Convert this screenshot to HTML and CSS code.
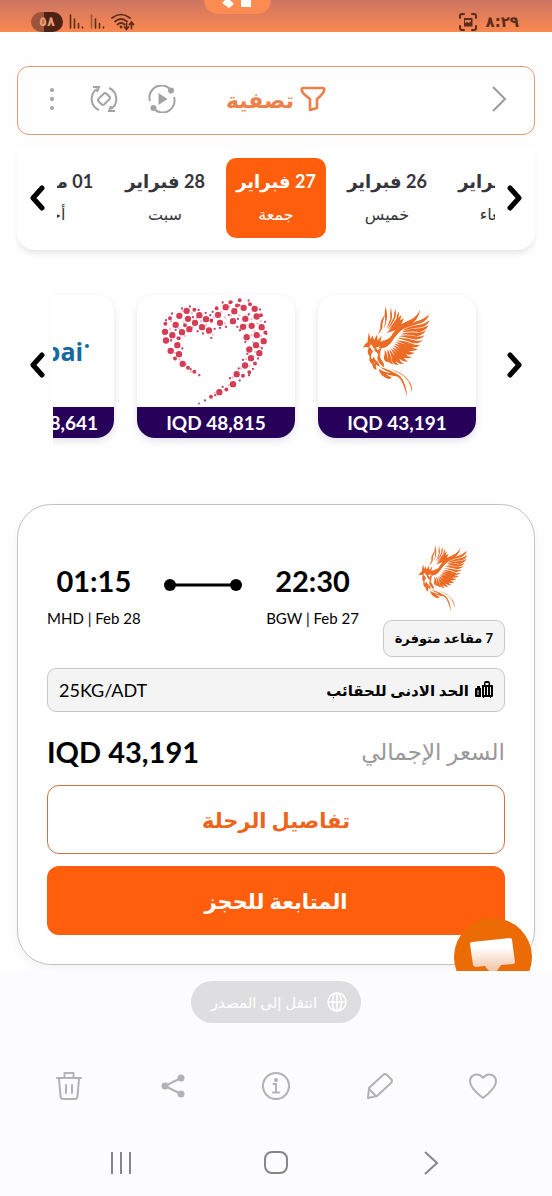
FILE: index.html
```html
<!DOCTYPE html>
<html lang="ar" dir="rtl">
<head>
<meta charset="utf-8">
<meta name="viewport" content="width=device-width, initial-scale=1">
<title>نتائج الرحلات</title>
<link rel="stylesheet" href="styles.css">
</head>
<body>
<svg class="defs" aria-hidden="true">
  <symbol id="phoenix" viewBox="180 80 210 280">
    <g fill="#ec6c26">
      <path d="M251 84q-6 24-1 44l-5 24q12-25 10-45zM267 86q-5 20-2 34l-12 32q20-28 17-43zM281 92q-7 12-5 24l-20 38q26-28 26-47zM292 99q-10 12-8 22l-27 37q32-27 33-43zM299 110q-15 11-16 21l-24 29q33-20 36-36zM306 120q-20 10-24 18l-23 24q34-15 42-30zM305 135q-24 5-34 13l-18 16q40-11 50-21z"/>
      <path d="M248 110q-16 18-13 40l-8 18q18-16 14-30z"/>
      <path d="M355 93q-10 22-27 30-40 16-56 43-8 17-24 20-12 6-18 24 26 2 40-20 14-24 40-42 40-16 45-55z"/>
      <path d="M381 108q-15 16-35 20-30 10-42 24 36-14 55-18 20-10 22-26zM383 125q-16 13-36 15-30 5-46 17 38-9 55-9 22-6 27-23zM380 142q-19 9-37 9-26 0-44 11 40-4 54 0 20-6 27-20zM372 157q-14 8-30 6-27-4-47 5 35 2 49 6 20-3 28-17zM368 171q-13 6-28 3-27-6-50 0 33 5 48 10 20 0 30-13zM364 185q-13 5-27 1-27-8-51-6 31 8 46 15 20 2 32-10zM357 199q-14 4-26-2-25-11-49-10 29 10 43 20 20 3 32-8zM349 212q-14 1-24-6-23-14-46-14 26 12 38 25 20 5 32-5zM338 224q-13 0-21-9-19-17-41-18 23 14 32 30 17 7 30-3zM329 237q-13-2-19-12-15-19-37-23 19 16 26 33 15 10 30 2zM319 249q-12-4-16-15-11-19-33-27 16 17 21 34 12 12 28 8zM305 257q-11-6-13-17-7-19-26-29 12 17 14 35 9 14 25 11zM290 261q-9-6-10-17-4-19-19-31 8 17 8 35 7 14 21 13zM275 259q-8-8-8-18-2-17-12-27 3 15 1 31 6 13 19 14zM260 252q-6-8-5-17 0-13-7-21 1 13-3 26 3 12 15 12z"/>
      <path d="M182 209q4-12 14-17l4-29 6 20 5-12 5 14 9-16 2 18 12-15-4 19 12-6-15 20-17 5-8-12-7 10q-8-3-18 1z"/>
      <path d="M202 205q-11 17 1 31-5 14 8 23 0 12 12 17-4-17 2-31l-9 13q-3-14 2-23l-10 8q-4-13 5-23zM219 201q-7 16 6 23l10 13q-3-20 7-31l-16 10zM229 229q-7 12 2 24l13 15q5-10-4-20zM214 236q-3 16 9 25l10 5q-2-14-11-18z"/>
      <path d="M230 272q2 20 27 30 9 2 12-4l-19-10q24 6 38 8 16 13 27 62-1-42-21-64-30-20-61-27 20 14 34 18-16 0-37-13z"/>
      <path d="M264 271q39 13 54 33 15 18 12 40-4-43-42-61-15-7-24-12z"/>
    </g>
  </symbol>
</svg>

<div class="app">
  <header class="status">
    <span class="clock">٨:٢٩</span>
    <svg class="capture" viewBox="0 0 18 18" width="18" height="18" fill="none" stroke="#5b2c18" stroke-width="2" stroke-linecap="round"><path d="M1 5V3q0-2 2-2h2M13 1h2q2 0 2 2v2M17 13v2q0 2-2 2h-2M5 17H3q-2 0-2-2v-2"/><path fill="#5b2c18" stroke="none" fill-rule="evenodd" d="M5 5h8.500v8.500H5zM6 7v3l2-1 2 1 2-2V7z"/></svg>
    <span class="signals">
      <svg viewBox="0 0 24 18" width="24" height="18" fill="none" stroke="#5b2c18" stroke-width="1.700" stroke-linecap="round"><path d="M1 5q9-7 18 0M4 8.500q6-5 12 0M6.500 11.500q3.500-3 7 0"/><circle cx="10" cy="14" r=".6" fill="#5b2c18"/><path d="M15.500 10v6M13.500 14l2 2.500 2-2.500M20.500 15.500v-6M18.500 11.500l2-2.500 2 2.500"/></svg>
      <svg viewBox="0 0 15 16" width="15" height="16" fill="none" stroke="#5b2c18" stroke-width="1.600" stroke-linecap="round"><path stroke-opacity=".5" d="M1.500 1v13"/><path d="M5.500 5v9M9.500 9.500V14M13.500 13v1"/></svg>
      <svg viewBox="0 0 15 16" width="15" height="16" fill="none" stroke="#5b2c18" stroke-width="1.600" stroke-linecap="round"><path d="M1.500 1v13M5.500 5v9M9.500 9.500V14M13.500 13v1"/></svg>
      <span class="battery">٥٨</span>
    </span>
    <span class="island"><svg viewBox="0 0 32 9" width="32" height="9" fill="#fff"><path d="M0 3l3-3h5l4 4-5 4zM19 0h10v7H19z"/></svg></span>
  </header>

  <main class="content">
    <div class="filter">
      <button class="plain" aria-label="التالي"><svg viewBox="0 0 18 28" width="18" height="28" fill="none" stroke="#9b9b9b" stroke-width="2"><path d="M3 2l12 12L3 26"/></svg></button>
      <button class="plain filter-name"><svg viewBox="0 0 26 26" width="26" height="26" fill="none" stroke="#ed8049" stroke-width="2.600" stroke-linejoin="round"><path d="M3 2h20q2 0 1 3-1 3-7 8v9l-7 2V13Q3 8 2 5 1 2 3 2z"/></svg>تصفية</button>
      <div class="tools">
        <button class="plain" aria-label="تشغيل"><svg viewBox="0 0 28 28" width="28" height="28" fill="none" stroke="#a3a3a3" stroke-width="2"><path d="M2 16A12 12 0 0 1 22 4M26 12A12 12 0 0 1 6 24"/><circle cx="23" cy="5.500" r="2" fill="#a3a3a3"/><circle cx="5.500" cy="23" r="2" fill="#a3a3a3"/><path fill="#a3a3a3" stroke="none" d="M10.500 8l9 6-9 6z"/></svg></button>
        <button class="plain" aria-label="تدوير"><svg viewBox="0 0 28 28" width="28" height="28" fill="none" stroke="#a3a3a3" stroke-width="2"><path d="M9 25A12 12 0 0 1 7 4M3 2h6l-2 5M19 3a12 12 0 0 1 2 21M25 26h-6l2-5"/><rect x="8.500" y="10" width="11" height="8" rx="2" transform="rotate(-45 14 14)"/></svg></button>
        <button class="plain" aria-label="المزيد"><svg viewBox="6 0 16 28" width="16" height="28" fill="#a3a3a3"><circle cx="14" cy="5" r="2"/><circle cx="14" cy="14" r="2"/><circle cx="14" cy="23" r="2"/></svg></button>
      </div>
    </div>

    <section class="dates">
      <button class="plain arrow" aria-label="السابق"><svg viewBox="0 0 16 26" width="16" height="26"><path d="M3 3l9 10-9 10"/></svg></button>
      <div class="date-list">
        <button class="date"><b>25 فبراير</b><span>أربعاء</span></button>
        <button class="date"><b>26 فبراير</b><span>خميس</span></button>
        <button class="date active"><b>27 فبراير</b><span>جمعة</span></button>
        <button class="date"><b>28 فبراير</b><span>سبت</span></button>
        <button class="date"><b>01 مارس</b><span>أحد</span></button>
      </div>
      <button class="plain arrow" aria-label="التالي"><svg viewBox="0 0 16 26" width="16" height="26"><path d="M13 3L4 13l9 10"/></svg></button>
    </section>

    <section class="airlines">
      <button class="plain arrow" aria-label="السابق"><svg viewBox="0 0 16 26" width="16" height="26"><path d="M3 3l9 10-9 10"/></svg></button>
      <div class="airline-list">
        <article class="airline">
          <div class="logo"><svg width="70" height="93"><use href="#phoenix"/></svg></div>
          <div class="fare" dir="ltr">IQD 43,191</div>
        </article>
        <article class="airline">
          <div class="logo"><svg viewBox="425 50 330 335" width="110" height="112" fill="none" stroke-linecap="round">
            <path stroke="#f8bdc2" stroke-width="7" d="M455 128h0M490 98h0M518 104h0M493 132h0M520 146h0M480 150h0M456 188h0M472 178h0M497 172h0M452 152h0M532 120h0M545 128h0M560 140h0M576 132h0M584 117h0M606 100h0M617 117h0M634 110h0M630 84h0M655 84h0M660 110h0M690 75h0M690 105h0M680 140h0M696 122h0M724 128h0M714 135h0M705 158h0M696 170h0M725 172h0M722 205h0M700 190h0M708 220h0M680 242h0M665 270h0M690 262h0M640 297h0M628 320h0M586 344h0M466 223h0M480 243h0M500 258h0M515 280h0M580 168h0M565 164h0M617 135h0"/>
            <path stroke="#b94878" stroke-width="7" d="M440 125h0M458 105h0M488 90h0M512 84h0M538 94h0M559 103h0M573 110h0M580 100h0M591 88h0M610 72h0M637 70h0M660 80h0M688 66h0M722 93h0M737 130h0M741 166h0M728 209h0M716 240h0M701 271h0M689 290h0M661 306h0M632 299h0M610 325h0M557 366h0M588 350h0M535 158h0M551 165h0M576 178h0M586 151h0M602 148h0M620 145h0M654 145h0M662 155h0M678 190h0M684 226h0M671 244h0M658 270h0M540 290h0M514 272h0M480 179h0M489 210h0M455 185h0M469 154h0M521 116h0M628 109h0M656 121h0M688 108h0"/>
            <path stroke="#d63c53" stroke-width="12" d="M452 119h0M525 94h0M633 71h0M661 65h0M692 77h0M653 81h0M725 110h0M738 162h0M467 240h0M576 126h0M592 89h0M690 281h0M671 292h0M621 333h0M575 355h0M525 280h0M506 268h0M478 179h0M707 255h0M497 140h0M438 136h0"/>
            <path stroke="#d63c53" stroke-width="19" d="M502 97h0M480 112h0M506 121h0M540 110h0M527 133h0M510 152h0M469 139h0M437 160h0M488 161h0M459 170h0M440 186h0M474 200h0M454 217h0M479 227h0M490 256h0M548 146h0M569 156h0M560 122h0M596 109h0M602 133h0M619 86h0M645 98h0M641 128h0M673 88h0M678 121h0M671 145h0M706 91h0M712 114h0M697 142h0M712 170h0M682 176h0M727 146h0M733 188h0M710 200h0M690 213h0M720 224h0M695 239h0M677 261h0M652 287h0M641 317h0M600 341h0"/>
            <path stroke="#b94878" stroke-width="6" d="M539 375h0"/>
          </svg></div>
          <div class="fare" dir="ltr">IQD 48,815</div>
        </article>
        <article class="airline">
          <div class="logo flydubai" dir="ltr"><i>fly</i>dubai<span></span></div>
          <div class="fare" dir="ltr">IQD 1,038,641</div>
        </article>
      </div>
      <button class="plain arrow" aria-label="التالي"><svg viewBox="0 0 16 26" width="16" height="26"><path d="M13 3L4 13l9 10"/></svg></button>
    </section>

    <article class="flight">
      <div class="legs">
        <div class="carrier">
          <svg width="51" height="68"><use href="#phoenix"/></svg>
          <span class="seats">7 مقاعد متوفرة</span>
        </div>
        <div class="leg" dir="ltr"><b>22:30</b><span>BGW | Feb 27</span></div>
        <svg class="route" viewBox="0 0 78 12" width="78" height="12"><path stroke="#000" stroke-width="3" d="M6 6h66"/><circle cx="6" cy="6" r="6"/><circle cx="72" cy="6" r="6"/></svg>
        <div class="leg" dir="ltr"><b>01:15</b><span>MHD | Feb 28</span></div>
      </div>
      <div class="baggage">
        <svg viewBox="0 0 18 18" width="18" height="18"><path fill-rule="evenodd" d="M1 7h1V5h3v2h1v9H1q-1 0-1-1V8q0-1 1-1zm1.500 2v5h1V9zM7 4h2V2q0-2 2-2h2q2 0 2 2v2h2q1 0 1 1v10q0 1-1 1h-1v1h-1v-1H9v1H8v-1H7zM10.500 4h3V2h-3zM9 6v8h1V6zm3 0v8h1V6zm3 0v8h1V6z"/></svg>
        <b>الحد الادنى للحقائب</b>
        <span class="weight" dir="ltr">25KG/ADT</span>
      </div>
      <div class="total"><span>السعر الإجمالي</span><b dir="ltr">IQD 43,191</b></div>
      <button class="action outline">تفاصيل الرحلة</button>
      <button class="action">المتابعة للحجز</button>
    </article>
  </main>

  <button class="chat" aria-label="محادثة"><svg viewBox="0 0 78 53" width="78" height="53"><defs><linearGradient id="bubble" x1="0" y1="0" x2="0" y2="1"><stop offset=".25" stop-color="#fff"/><stop offset="1" stop-color="#f0b896"/></linearGradient></defs><path fill="url(#bubble)" d="M18 24l38-4q2 0 2 2l3 22q0 2-2 2l-12 1-2 3-5 7-7-6-2-3-9 1q-2 0-3-2l-3-21q0-2 2-2z"/></svg></button>
</div>

<footer class="bottom">
  <button class="source"><svg viewBox="0 0 20 20" width="20" height="20" fill="none" stroke="#fff" stroke-width="1.500"><circle cx="10" cy="10" r="9"/><ellipse cx="10" cy="10" rx="4.500" ry="9"/><path d="M1 10h18M10 1v18"/></svg>انتقل إلى المصدر</button>
  <div class="photo-tools">
    <button class="plain" aria-label="المفضلة"><svg viewBox="0 0 30 30"><path d="M15 27Q2 17 2 10.500C2 3 11 1 15 7c4-6 13-4 13 3.500Q28 17 15 27z"/></svg></button>
    <button class="plain" aria-label="تعديل"><svg viewBox="0 0 30 30"><path d="M3 27l1-10L18 4q2-2 4 0l4 4q2 2 0 4L12 25zM4 18l7 7"/></svg></button>
    <button class="plain" aria-label="معلومات"><svg viewBox="0 0 30 30"><circle cx="15" cy="15" r="13"/><path d="M12.500 13H15v8M12 21.500h6"/><circle cx="15" cy="9" r="1" fill="#b2b2b4"/></svg></button>
    <button class="plain" aria-label="مشاركة"><svg viewBox="0 0 30 30"><path d="M23 7L7 15l16 8"/><g fill="#b2b2b4"><circle cx="23" cy="7" r="2.500"/><circle cx="7" cy="15" r="2.500"/><circle cx="23" cy="23" r="2.500"/></g></svg></button>
    <button class="plain" aria-label="حذف"><svg viewBox="0 0 30 30"><path d="M3 7h24M10.500 6V2h9v4M5 8l1.500 17q0 3 3 3h11q3 0 3-3L25 8M12 14v8M18 14v8"/></svg></button>
  </div>
  <nav class="system">
    <button class="plain" aria-label="رجوع"><svg viewBox="0 0 24 24"><path d="M6 1l12 11L6 23"/></svg></button>
    <button class="plain" aria-label="الرئيسية"><svg viewBox="0 0 24 24"><rect x="1" y="1" width="22" height="21" rx="7"/></svg></button>
    <button class="plain" aria-label="التطبيقات"><svg viewBox="0 0 24 24"><path d="M3 1v22M12 1v22M21 1v22"/></svg></button>
  </nav>
</footer>
</body>
</html>
```

FILE: styles.css
```css
* { box-sizing: border-box; }
body {
  margin: 0;
  background: #fcfcfe;
  color: #000;
  font-family: Lato, "DejaVu Sans", sans-serif;
  font-size: 16px;
}
button {
  font: inherit;
  color: inherit;
  padding: 0;
  border: 0;
  background: none;
}
svg { display: block; flex: none; }
.defs { position: absolute; width: 0; height: 0; }
.plain { display: flex; align-items: center; justify-content: center; }

.app {
  position: relative;
  overflow: hidden;
  background: #fefefe;
  padding-bottom: 6px;
}
.status {
  position: relative;
  display: flex;
  align-items: center;
  gap: 9px;
  height: 32px;
  padding: 12px 33px 0 31px;
  background: linear-gradient(#cd7563, #fa8850);
  color: #5b2c18;
}
.clock { font: bold 15px/20px "DejaVu Sans", sans-serif; }
.signals { display: flex; align-items: center; gap: 6px; margin-right: auto; }
.battery {
  width: 32px;
  height: 20px;
  border-radius: 10px;
  background: linear-gradient(to right, #9d5438 40%, #4c2314 40%);
  color: #e99c73;
  font: bold 13px/20px "DejaVu Sans", sans-serif;
  text-align: center;
}
.island {
  position: absolute;
  top: 0;
  left: calc(50% - 72px);
  width: 67px;
  height: 14px;
  border-radius: 0 0 14px 14px;
  background: #fb8b50;
}
.island svg { margin: 0 17px 0 0; }

.content { padding: 34px 17px 0; }
.filter {
  display: grid;
  grid-template-columns: 1fr auto 1fr;
  align-items: center;
  height: 69px;
  padding: 0 26px 3px;
  border: 1px solid #dc9a76;
  border-radius: 12px;
}
.filter > .plain:first-child { justify-self: start; }
.filter-name { gap: 6px; color: #ed8049; font-size: 22px; font-weight: bold; }
.tools { display: flex; gap: 30px; justify-self: end; }

.dates {
  display: flex;
  align-items: center;
  justify-content: space-between;
  height: 101px;
  margin-top: 14px;
  padding: 0 12px 4px;
  border-radius: 0 0 18px 18px;
  background: #fff;
  box-shadow: 0 5px 6px -2px #e4e4e4;
}
.arrow path { fill: none; stroke: #000; stroke-width: 5; stroke-linecap: round; stroke-linejoin: round; }
.date-list {
  display: flex;
  flex: 1;
  min-width: 0;
  justify-content: center;
  gap: 11px;
  margin: 0 12px;
  overflow: hidden;
}
.date {
  display: flex;
  flex: none;
  flex-direction: column;
  align-items: center;
  gap: 8px;
  width: 100px;
  height: 80px;
  padding-top: 10px;
  border-radius: 10px;
  color: #35353b;
  white-space: nowrap;
}
.date b { font-size: 18px; line-height: 26px; }
.date span { font-size: 16px; line-height: 24px; }
.date.active { background: #ff5f0c; color: #fff; }

.airlines { display: flex; align-items: center; margin-top: 28px; padding: 0 12px; }
.airline-list {
  display: flex;
  flex: 1;
  min-width: 0;
  gap: 23px;
  margin: 0 8px;
  padding: 17px 23px 14px 0;
  overflow: hidden;
}
.airline {
  flex: none;
  width: 158px;
  border-radius: 18px;
  overflow: hidden;
  background: #fff;
  box-shadow: 0 3px 7px #e4e2ec;
}
.logo { display: flex; align-items: center; justify-content: center; height: 112px; }
.fare {
  height: 31px;
  background: #270059;
  color: #fff;
  font-size: 19px;
  font-weight: bold;
  line-height: 31px;
  text-align: center;
}
.flydubai { color: #176a9f; font: bold 25px/30px "Open Sans", sans-serif; }
.flydubai i { color: #ef7622; font-style: normal; }
.flydubai span { width: 4px; height: 4px; margin: 0 0 10px 2px; border-radius: 50%; background: #176a9f; }

.flight {
  display: flex;
  flex-direction: column;
  margin-top: 52px;
  padding: 39px 29px 29px;
  border: 1px solid #c2c2c2;
  border-radius: 34px;
  background: #fff;
  box-shadow: 0 4px 10px #f3f3f6;
}
.legs { display: flex; justify-content: space-between; }
.carrier { display: flex; flex-direction: column; align-items: center; gap: 8px; }
.seats {
  height: 37px;
  padding: 0 11px;
  border: 1px solid #c8c8c8;
  border-radius: 9px;
  background: #f4f4f4;
  font-size: 13px;
  font-weight: bold;
  line-height: 35px;
  white-space: nowrap;
}
.leg { display: flex; flex-direction: column; align-items: center; gap: 9px; padding-top: 19px; white-space: nowrap; }
.leg b { font-size: 29px; line-height: 36px; }
.leg span { font-size: 15px; line-height: 20px; }
.route { margin-top: 35px; }
.baggage {
  display: flex;
  align-items: center;
  gap: 6px;
  height: 44px;
  margin-top: 11px;
  padding: 0 11px;
  border: 1px solid #c8c8c8;
  border-radius: 9px;
  background: #f4f4f4;
}
.baggage b { font-size: 15px; }
.weight { margin-right: auto; font-size: 18px; }
.total { display: flex; align-items: center; justify-content: space-between; height: 73px; padding-top: 5px; }
.total span { color: #999; font-size: 23px; }
.total b { font-size: 29px; }
.action {
  height: 69px;
  border-radius: 12px;
  background: #ff5f0c;
  color: #fff;
  font-size: 21px;
  font-weight: bold;
}
.action.outline { margin-bottom: 12px; border: 1px solid #d17243; background: #fff; color: #ed651b; }

.chat {
  position: absolute;
  right: 20px;
  bottom: -25px;
  width: 78px;
  height: 78px;
  border-radius: 50%;
  background: #eb6b05;
}
.chat svg { margin-bottom: 25px; }

.bottom { display: flex; flex-direction: column; align-items: center; padding-top: 10px; }
.source {
  display: flex;
  align-items: center;
  gap: 10px;
  height: 42px;
  padding: 0 14px 0 20px;
  border-radius: 21px;
  background: #dedee0;
  color: #fff;
  font-size: 15px;
}
.photo-tools { display: flex; justify-content: space-between; width: 100%; margin-top: 48px; padding: 0 54px; }
.photo-tools svg { width: 30px; height: 30px; fill: none; stroke: #b2b2b4; stroke-width: 2; stroke-linejoin: round; stroke-linecap: round; }
.system { display: flex; justify-content: space-between; width: 100%; margin-top: 50px; padding: 0 109px; }
.system svg { width: 24px; height: 24px; fill: none; stroke: #858585; stroke-width: 2; }
```
